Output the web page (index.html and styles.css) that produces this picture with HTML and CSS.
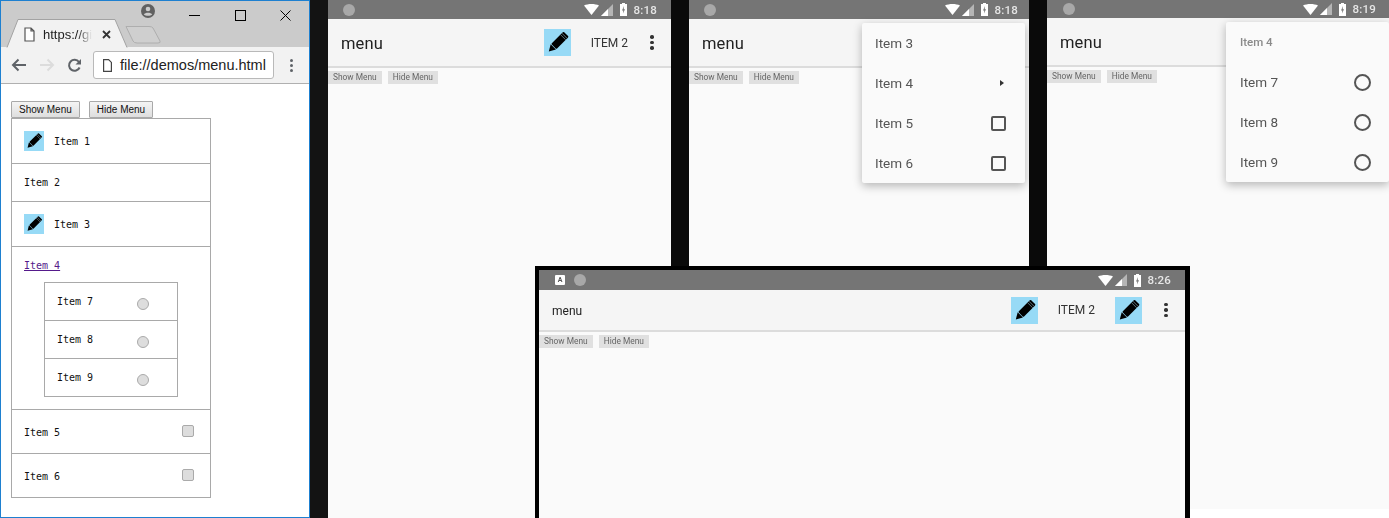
FILE: index.html
```html
<!DOCTYPE html>
<html lang="en">
<head>
  <meta charset="UTF-8" />
  <title>Menu demos</title>
  <link rel="stylesheet" href="styles.css">
</head>
<body>

  <svg class="defs" aria-hidden="true">
    <symbol id="pencil" viewBox="0 0 27 27">
      <rect width="27" height="27" fill="#97daf6" />
      <g transform="rotate(45 13.5 13.5)">
        <rect x="10" y="1.5" width="7.4" height="17.5" rx="1" fill="#000" />
        <path d="M10 19.6h7.4L13.7 26z" fill="#000" />
        <path d="M10 3.8h7.4M10 5.8h7.4" stroke="#6f8790" stroke-width=".8" />
      </g>
    </symbol>
    <symbol id="wifi" viewBox="0 0 15 11">
      <path d="M0 1.5C4 -.5 11 -.5 15 1.5L7.5 11z" fill="#fff" />
    </symbol>
    <symbol id="signal" viewBox="0 0 12 12">
      <path d="M12 0V12H0z" fill="#b5b5b5" />
      <path d="M7 5V12H0z" fill="#fff" />
    </symbol>
    <symbol id="battery" viewBox="0 0 7 13">
      <path d="M2 0h3v1h2v12H0V1h2z" fill="#fff" />
      <path d="M4 3L2 7.5h1.3L3 10.5l2-4.3H3.700z" fill="#757575" />
    </symbol>
  </svg>

  <!-- desktop browser -->
  <div class="browser">
    <div class="tabstrip">
      <svg class="tab-shape" width="170" height="30" viewBox="0 0 170 30">
        <path d="M6 29.500L17 1.500H114L126 29.500" fill="#f2f2f2" stroke="#a3a3a3" />
        <path d="M125 8.500H148Q151 8.500 152 10L159 23Q160 25 157 25H136Q133 25 132 23Z" fill="#cfcfcf" stroke="#aeaeae" />
      </svg>
      <svg class="tab-doc" width="11" height="15" viewBox="0 0 11 15">
        <path d="M1 1h6l3 3v10H1z M7 1v3h3" fill="#fff" stroke="#555" stroke-width="1.200" />
      </svg>
      <span class="tab-title">https://gi</span>
      <svg class="tab-close" width="9" height="9" viewBox="0 0 9 9">
        <path d="M1 1l7 7M8 1L1 8" stroke="#333" stroke-width="1.800" />
      </svg>
      <svg class="avatar" width="14" height="14" viewBox="0 0 14 14">
        <circle cx="7" cy="7" r="7" fill="#616161" />
        <circle cx="7" cy="5" r="2.300" fill="#ccc" />
        <path d="M2.800 10.500C4 8.300 10 8.300 11.200 10.500C9.500 12.300 4.500 12.300 2.800 10.500z" fill="#ccc" />
      </svg>
      <svg class="win-min" width="11" height="1"><rect width="11" height="1" fill="#000" /></svg>
      <svg class="win-max" width="11" height="11"><rect x=".5" y=".5" width="10" height="10" fill="none" stroke="#000" /></svg>
      <svg class="win-close" width="11" height="11" viewBox="0 0 11 11">
        <path d="M.5 .5l10 10M10.500 .5l-10 10" stroke="#000" />
      </svg>
    </div>
    <div class="toolbar">
      <svg class="nav-icon" width="16" height="14" viewBox="0 0 16 14">
        <path d="M15 7H2M7.500 1.500L2 7l5.500 5.500" fill="none" stroke="#5f6368" stroke-width="2" />
      </svg>
      <svg class="nav-icon" width="16" height="14" viewBox="0 0 16 14">
        <path d="M1 7h13M8.500 1.500L14 7l-5.500 5.500" fill="none" stroke="#dcdcdc" stroke-width="2" />
      </svg>
      <svg class="nav-icon" width="15" height="15" viewBox="0 0 15 15">
        <path d="M12.600 9.500A5.500 5.500 0 1 1 12 4" fill="none" stroke="#5f6368" stroke-width="2" />
        <path d="M14 1v5.500H8.500z" fill="#5f6368" />
      </svg>
      <div class="omnibox">
        <svg width="9" height="13" viewBox="0 0 9 13">
          <path d="M.6 .6h5l2.800 2.800v9H.6z" fill="#fff" stroke="#444" stroke-width="1.200" />
        </svg>
        <span>file://demos/menu.html</span>
      </div>
      <div class="chrome-kebab"><i></i><i></i><i></i></div>
    </div>
    <div class="demo-page">
      <div class="demo-buttons">
        <button class="demo-btn">Show Menu</button>
        <button class="demo-btn">Hide Menu</button>
      </div>
      <div class="demo-list">
        <div class="demo-row row-icon"><svg class="demo-icon"><use href="#pencil" /></svg>Item 1</div>
        <div class="demo-row row-plain">Item 2</div>
        <div class="demo-row row-icon"><svg class="demo-icon"><use href="#pencil" /></svg>Item 3</div>
        <div class="demo-row row-sub">
          <a href="#" class="demo-link">Item 4</a>
          <div class="sub-list">
            <div class="sub-row">Item 7<span class="fake-radio"></span></div>
            <div class="sub-row">Item 8<span class="fake-radio"></span></div>
            <div class="sub-row">Item 9<span class="fake-radio"></span></div>
          </div>
        </div>
        <div class="demo-row row-check">Item 5<span class="fake-check"></span></div>
        <div class="demo-row row-check">Item 6<span class="fake-check"></span></div>
      </div>
    </div>
  </div>

  <!-- phone 1 -->
  <div class="phone phone-a">
    <div class="screen">
      <div class="status">
        <span class="dot"></span>
        <div class="status-right">
          <svg class="st-wifi"><use href="#wifi" /></svg>
          <svg class="st-signal"><use href="#signal" /></svg>
          <svg class="st-battery"><use href="#battery" /></svg>
          <span class="time">8:18</span>
        </div>
      </div>
      <div class="appbar">
        <span class="app-title">menu</span>
        <svg class="action-icon"><use href="#pencil" /></svg>
        <span class="action-text">ITEM 2</span>
        <div class="kebab"><i></i><i></i><i></i></div>
      </div>
      <div class="page-btns"><span class="page-btn">Show Menu</span><span class="page-btn">Hide Menu</span></div>
    </div>
  </div>

  <!-- phone 2 -->
  <div class="phone phone-b">
    <div class="screen">
      <div class="status">
        <span class="dot"></span>
        <div class="status-right">
          <svg class="st-wifi"><use href="#wifi" /></svg>
          <svg class="st-signal"><use href="#signal" /></svg>
          <svg class="st-battery"><use href="#battery" /></svg>
          <span class="time">8:18</span>
        </div>
      </div>
      <div class="appbar">
        <span class="app-title">menu</span>
      </div>
      <div class="page-btns"><span class="page-btn">Show Menu</span><span class="page-btn">Hide Menu</span></div>
      <div class="popup popup-b">
        <div class="popup-row">Item 3</div>
        <div class="popup-row">Item 4<span class="sub-arrow"></span></div>
        <div class="popup-row">Item 5<span class="check-box"></span></div>
        <div class="popup-row">Item 6<span class="check-box"></span></div>
      </div>
    </div>
  </div>

  <!-- phone 3 -->
  <div class="phone phone-c">
    <div class="screen">
      <div class="status">
        <span class="dot"></span>
        <div class="status-right">
          <svg class="st-wifi"><use href="#wifi" /></svg>
          <svg class="st-signal"><use href="#signal" /></svg>
          <svg class="st-battery"><use href="#battery" /></svg>
          <span class="time">8:19</span>
        </div>
      </div>
      <div class="appbar">
        <span class="app-title">menu</span>
      </div>
      <div class="page-btns"><span class="page-btn">Show Menu</span><span class="page-btn">Hide Menu</span></div>
      <div class="popup popup-c">
        <div class="popup-row popup-head">Item 4</div>
        <div class="popup-row">Item 7<span class="radio-ring"></span></div>
        <div class="popup-row">Item 8<span class="radio-ring"></span></div>
        <div class="popup-row">Item 9<span class="radio-ring"></span></div>
      </div>
    </div>
  </div>

  <!-- phone 4, landscape -->
  <div class="phone phone-d">
    <div class="screen">
      <div class="status">
        <span class="a-badge">A</span>
        <span class="dot"></span>
        <div class="status-right">
          <svg class="st-wifi"><use href="#wifi" /></svg>
          <svg class="st-signal"><use href="#signal" /></svg>
          <svg class="st-battery"><use href="#battery" /></svg>
          <span class="time">8:26</span>
        </div>
      </div>
      <div class="appbar">
        <span class="app-title">menu</span>
        <svg class="action-icon"><use href="#pencil" /></svg>
        <span class="action-text">ITEM 2</span>
        <svg class="action-icon"><use href="#pencil" /></svg>
        <div class="kebab"><i></i><i></i><i></i></div>
      </div>
      <div class="page-btns"><span class="page-btn">Show Menu</span><span class="page-btn">Hide Menu</span></div>
    </div>
  </div>

</body>
</html>
```

FILE: styles.css
```css
html, body {
  margin: 0;
  padding: 0;
}

body {
  position: relative;
  width: 1389px;
  height: 518px;
  overflow: hidden;
  background: #fff;
  font-family: "Liberation Sans", Arial, sans-serif;
}

.defs {
  position: absolute;
  width: 0;
  height: 0;
}

/* desktop browser window */
.browser {
  position: absolute;
  left: 0;
  top: 0;
  width: 310px;
  height: 518px;
  box-sizing: border-box;
  border: 1px solid #1e80d0;
  background: #fff;
  display: flex;
  flex-direction: column;
}

.tabstrip {
  position: relative;
  height: 46px;
  background: #cbcbcb;
  flex-shrink: 0;
}

.tab-shape { position: absolute; left: 0; top: 17px; }
.tab-doc { position: absolute; left: 23px; top: 26px; }
.tab-close { position: absolute; left: 101px; top: 29px; }
.avatar { position: absolute; left: 140px; top: 3px; }
.win-min { position: absolute; left: 188px; top: 14px; }
.win-max { position: absolute; left: 234px; top: 9px; }
.win-close { position: absolute; left: 279px; top: 9px; }

.tab-title {
  position: absolute;
  left: 42px;
  top: 26px;
  white-space: nowrap;
  font-size: 13px;
  line-height: 15px;
  color: #222;
  -webkit-mask-image: linear-gradient(to right, #000 70%, transparent);
  mask-image: linear-gradient(to right, #000 70%, transparent);
}

.toolbar {
  height: 37px;
  flex-shrink: 0;
  box-sizing: border-box;
  background: #f2f2f2;
  border-bottom: 1px solid #b0b0b0;
  display: flex;
  align-items: center;
  padding-left: 10px;
}

.nav-icon { margin-right: 12px; }

.omnibox {
  width: 181px;
  height: 28px;
  box-sizing: border-box;
  margin-left: -1px;
  background: #fff;
  border: 1px solid #b9b9b9;
  border-radius: 3px;
  display: flex;
  align-items: center;
  gap: 8px;
  padding-left: 9px;
  font-size: 14.500px;
  color: #222;
  white-space: nowrap;
}

.chrome-kebab {
  margin-left: 16px;
  display: flex;
  flex-direction: column;
  gap: 2px;
}

.chrome-kebab i {
  width: 3px;
  height: 3px;
  border-radius: 50%;
  background: #5f6368;
}

.demo-page {
  padding: 17px 0 0 10px;
}

.demo-buttons {
  display: flex;
  gap: 9px;
  height: 17px;
}

.demo-btn {
  height: 17px;
  padding: 0 7px;
  margin: 0;
  font-family: "Liberation Sans", Arial, sans-serif;
  font-size: 10px;
  color: #111;
  background: linear-gradient(#f4f4f4, #dedede);
  border: 1px solid #a9a9a9;
  border-radius: 1px;
}

.demo-list {
  width: 200px;
  box-sizing: border-box;
  border: 1px solid #a9a9a9;
  font-family: "DejaVu Sans Mono", monospace;
  font-size: 10px;
  color: #111;
}

.demo-row {
  box-sizing: border-box;
  border-bottom: 1px solid #a9a9a9;
  display: flex;
  align-items: center;
  padding-left: 12px;
}

.demo-row:last-child {
  height: 43px;
  border-bottom: none;
}

.row-icon { height: 45px; }
.row-plain { height: 38px; }

.row-check {
  height: 44px;
  position: relative;
  padding-top: 1px;
}

.demo-icon {
  width: 20px;
  height: 20px;
  margin-right: 10px;
}

.row-sub {
  height: 163px;
  flex-direction: column;
  align-items: flex-start;
}

.demo-link {
  margin-top: 12px;
  line-height: 13px;
  color: #551a8b;
}

.sub-list {
  width: 134px;
  box-sizing: border-box;
  margin: 10px 0 0 20px;
  border: 1px solid #a9a9a9;
}

.sub-row {
  height: 38px;
  box-sizing: border-box;
  border-bottom: 1px solid #a9a9a9;
  display: flex;
  align-items: center;
  padding: 0 0 1px 12px;
  position: relative;
}

.sub-row:last-child {
  height: 37px;
  border-bottom: none;
}

.fake-radio {
  position: absolute;
  left: 92px;
  top: 15px;
  width: 12px;
  height: 12px;
  box-sizing: border-box;
  border: 1px solid #aaa;
  border-radius: 50%;
  background: #ddd;
}

.fake-check {
  position: absolute;
  left: 170px;
  top: 15px;
  width: 12px;
  height: 12px;
  box-sizing: border-box;
  border: 1px solid #aaa;
  border-radius: 2px;
  background: #ddd;
}

/* emulator frames */
.phone {
  position: absolute;
  top: 0;
  height: 518px;
  box-sizing: border-box;
  border-left: 18px solid #0a0a0a;
  background: #fafafa;
}

.phone-a { left: 310px; width: 361px; border-left-color: #131313; }
.phone-b { left: 671px; width: 358px; }
.phone-c { left: 1029px; width: 360px; height: 509px; }

.phone-d {
  left: 535px;
  top: 266px;
  width: 655px;
  height: 252px;
  border: 4px solid #000;
  border-right-width: 5px;
  border-bottom: none;
}

.screen {
  position: relative;
  height: 100%;
  overflow: hidden;
  font-family: Roboto, sans-serif;
  background: #fafafa;
  filter: blur(.35px);
}

.status {
  height: 19px;
  background: #757575;
  display: flex;
  align-items: center;
  padding-left: 15px;
}

.phone-c .status { height: 18px; }
.phone-d .status { height: 20px; padding-left: 35px; position: relative; }

.dot {
  width: 12px;
  height: 12px;
  border-radius: 50%;
  background: #a8a8a8;
}

.phone-c .dot { margin-left: 1px; }

.a-badge {
  position: absolute;
  left: 16px;
  top: 5px;
  width: 10px;
  height: 10px;
  background: #fff;
  color: #555;
  font-size: 7px;
  font-weight: 700;
  line-height: 10px;
  text-align: center;
  border-radius: 1px;
}

.status-right {
  margin-left: auto;
  display: flex;
  align-items: center;
  height: 100%;
}

.phone-a .status-right { padding-right: 14px; }
.phone-b .status-right { padding-right: 11px; }
.phone-c .status-right { padding-right: 13px; }
.phone-d .status-right { padding-right: 14px; }

.st-wifi { width: 15px; height: 11px; }
.st-signal { width: 12px; height: 12px; margin-left: 2px; }
.st-battery { width: 7px; height: 13px; margin-left: 7px; }

.time {
  margin-left: 7px;
  font-size: 11.500px;
  font-weight: 500;
  color: #e6e6e6;
  letter-spacing: .2px;
}

.appbar {
  height: 47px;
  background: #f5f5f5;
  border-bottom: 2px solid #dcdcdc;
  display: flex;
  align-items: center;
  padding-left: 13px;
}

.phone-d .appbar { height: 40px; }

.app-title {
  padding-top: 1px;
  font-size: 16.500px;
  font-weight: 400;
  letter-spacing: .1px;
  color: #222;
  margin-right: auto;
}

.phone-d .app-title {
  font-size: 12px;
  letter-spacing: 0;
}

.action-icon {
  width: 27px;
  height: 27px;
}

.action-text {
  margin: 0 20px;
  font-size: 12px;
  font-weight: 400;
  color: #333;
}

.kebab {
  width: 6px;
  margin-right: 16px;
  margin-left: 1px;
  display: flex;
  flex-direction: column;
  align-items: center;
  gap: 2px;
}

.phone-d .kebab { margin-left: 21px; }

.kebab i {
  width: 3.500px;
  height: 3.500px;
  border-radius: 50%;
  background: #333;
}

.page-btns {
  display: flex;
  gap: 6px;
  margin-top: 3px;
}

.page-btn {
  height: 13px;
  line-height: 13px;
  padding: 0 5px;
  background: #e0e0e0;
  font-size: 8.400px;
  color: #666;
  white-space: nowrap;
}

/* overflow popups */
.popup {
  position: absolute;
  top: 22px;
  width: 163px;
  background: #fafafa;
  border-radius: 2px;
  box-shadow: 0 3px 10px rgba(0, 0, 0, .28);
}

.popup-b { left: 173px; top: 23px; }
.popup-c { left: 179px; }

.popup-row {
  height: 40px;
  box-sizing: border-box;
  display: flex;
  align-items: center;
  justify-content: space-between;
  padding: 0 19px 0 13px;
  font-size: 13.500px;
  color: #555;
}

.popup-c .popup-row { padding-left: 14px; padding-right: 18px; }
.popup-c .popup-head { font-size: 11.500px; font-weight: 500; color: #8a8a8a; }

.check-box {
  width: 15px;
  height: 15px;
  box-sizing: border-box;
  border: 2px solid #555;
  border-radius: 2px;
}

.sub-arrow {
  width: 0;
  height: 0;
  margin-right: 2px;
  border-left: 4px solid #333;
  border-top: 3.500px solid transparent;
  border-bottom: 3.500px solid transparent;
}

.radio-ring {
  width: 17px;
  height: 17px;
  box-sizing: border-box;
  border: 2px solid #555;
  border-radius: 50%;
}
```
